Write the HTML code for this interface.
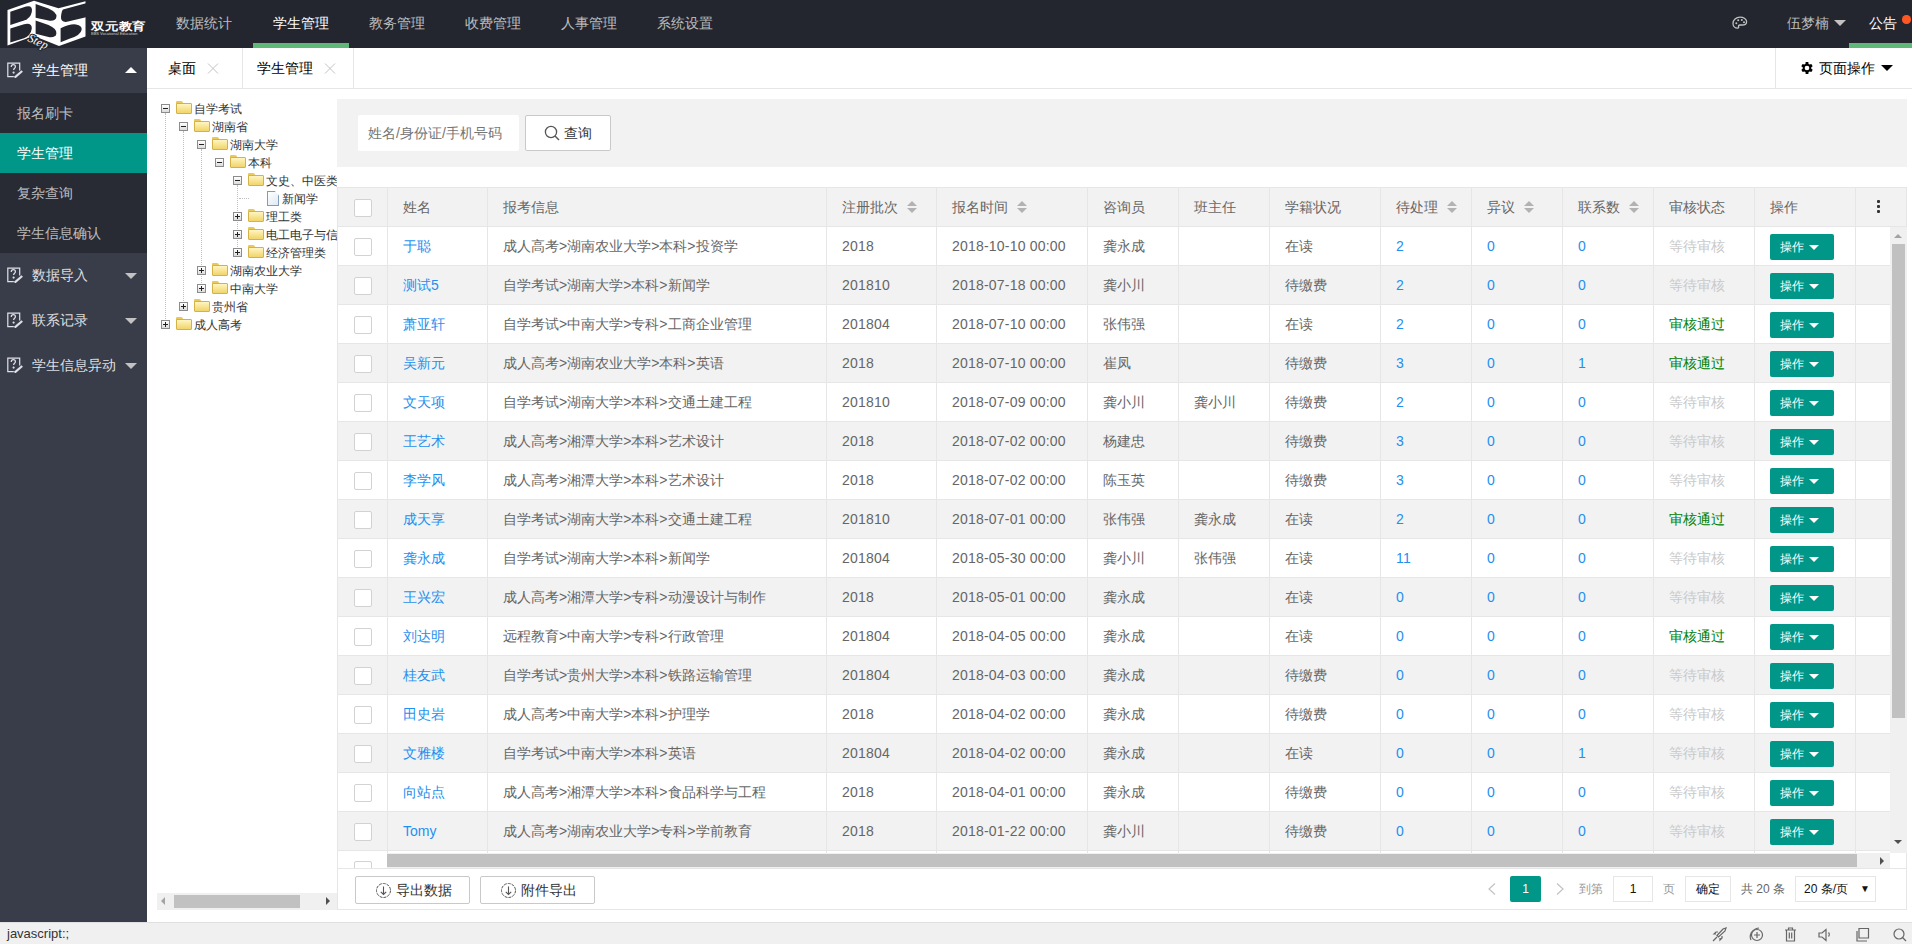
<!DOCTYPE html>
<html><head><meta charset="utf-8">
<style>
*{box-sizing:border-box;margin:0;padding:0}
html,body{width:1912px;height:944px;overflow:hidden;background:#fff;font-family:"Liberation Sans",sans-serif;font-size:14px;color:#333}
.abs{position:absolute}
#hdr{position:absolute;left:0;top:0;width:1912px;height:48px;background:#23262E;z-index:5}
.nav{position:absolute;top:0;height:48px;line-height:46px;color:rgba(255,255,255,.7);font-size:14px;white-space:nowrap}
.nav.on{color:#fff}
#side{position:absolute;left:0;top:48px;width:147px;height:874px;background:#393D49}
.grp{position:absolute;left:0;width:147px;height:45px;line-height:45px;color:rgba(255,255,255,.85);font-size:14px}
.grp .t{position:absolute;left:32px;top:0}
.grp .ic{position:absolute;left:7px;top:14px;width:16px;height:16px}
.grp .ar{position:absolute;left:125px;top:20px;width:0;height:0;border-left:6px solid transparent;border-right:6px solid transparent;border-top:6px solid #c2c2c2}
.sub{position:absolute;left:0;width:147px;height:40px;line-height:40px;color:rgba(255,255,255,.7);padding-left:17px}
#tabs{position:absolute;left:147px;top:48px;width:1765px;height:41px;background:#fff;border-bottom:1px solid #e6e6e6}
.tab{position:absolute;top:0;height:40px;line-height:40px;color:#000;font-size:14px;font-weight:500}
.tab .x{position:absolute;top:0;color:#c2c2c2;font-size:15px}
#status{position:absolute;left:0;top:922px;width:1912px;height:22px;background:#f0f0f0;border-top:1px solid #e0e0e0}

.sw{width:9px;height:9px;border:1px solid #8c8c8c;background:linear-gradient(#fff,#dcdcdc);}
.sw .h{position:absolute;left:1px;top:3px;width:5px;height:1px;background:#222}
.sw .v{position:absolute;left:3px;top:1px;width:1px;height:5px;background:#222}
.fd{width:16px;height:13px}
.fd::before{content:"";position:absolute;left:0;top:0;width:7px;height:4px;background:#e9c95b;border-radius:1px 2px 0 0}
.fd i{position:absolute;left:0;top:2px;width:16px;height:11px;background:linear-gradient(#fff5c0,#f1d46a);border:1px solid #d4b24a;border-radius:1px}
.fl{width:12px;height:15px;border:1px solid #7f9db9;background:linear-gradient(135deg,#fff,#dfe9f5);clip-path:polygon(0 0,65% 0,100% 30%,100% 100%,0 100%)}
.tt{font-size:12px;line-height:18px;color:#333;white-space:nowrap}
.dl{width:1px;border-left:1px dotted #c0c0c0}
.vl{width:1px;background:#e6e6e6}
.cb{width:18px;height:18px;border:1px solid #d2d2d2;background:#fff;border-radius:2px}
.th{font-size:14px;line-height:20px;color:#666;white-space:nowrap}
.td{font-size:14px;line-height:20px;color:#666;white-space:nowrap}
.lk{font-size:14px;line-height:20px;color:#1E90F0;white-space:nowrap}
.num{letter-spacing:0.2px}
.sort{width:10px;height:12px}
.sort .u{position:absolute;left:0;top:0;border-left:5px solid transparent;border-right:5px solid transparent;border-bottom:5px solid #b2b2b2}
.sort .d{position:absolute;left:0;top:7px;border-left:5px solid transparent;border-right:5px solid transparent;border-top:5px solid #b2b2b2}
.btn{width:64px;height:26px;background:#009688;color:#fff;border-radius:2px;font-size:12px;line-height:26px;padding-left:10px}
.btn i{position:absolute;left:39px;top:11px;border-left:5px solid transparent;border-right:5px solid transparent;border-top:5px solid #fff}
.obtn{width:115px;height:28px;border:1px solid #c9c9c9;background:#fff;border-radius:2px;font-size:14px;line-height:26px;color:#333}
.pg{font-size:12px;line-height:26px}
</style></head><body>

<!-- HEADER -->
<div id="hdr">
  <svg class="abs" style="left:0;top:0;overflow:visible" width="92" height="52" viewBox="0 0 92 52">
    <polygon points="7.5,10 34,0.8 58.5,8.3 85.5,1.3 85.5,36.5 59,46 34,36 7.5,45.5" fill="#fff"/>
    <g fill="#23262E">
      <path d="M10.3,11.8 L26,6.6 Q33,5 31.8,12 Q30.5,18.5 24,20.6 L10.3,25 Z"/>
      <path d="M10.3,28.4 L24,24.2 Q32,22.4 31.8,28.4 Q30.8,35.5 24,38.2 L10.3,42.4 Z"/>
      <path d="M35.6,4 L48.5,8.6 Q57,12.2 56.4,17 Q55.6,21.6 48.5,20.6 L35.6,17.8 Z"/>
      <path d="M35.6,20.5 L48.5,25 Q57,28.8 56.4,33.4 Q55.6,38 48.5,37 L35.6,33.8 Z"/>
      <path d="M63,9.6 L86,3.2 L86,17.2 L67,21.8 Q60.6,22.6 61,16.6 Q61.5,11.2 63,9.6 Z"/>
      <path d="M60.6,28.2 Q70,23.6 76,24.4 Q82.5,25.6 81.6,30 Q80.6,35.2 70,38.6 L60.6,42.2 Z"/>
    </g>
    <g transform="translate(30.5 33.5) rotate(25)"><text x="0" y="8" fill="#23262E" stroke="#23262E" stroke-width="2.2" font-size="12" font-style="italic" font-family="Liberation Serif">Step</text><text x="0" y="8" fill="#fff" font-size="12" font-style="italic" font-family="Liberation Serif">Step</text></g>
  </svg>
  <div class="abs" style="left:91px;top:19px;color:#fff;font-weight:bold;font-size:14px;line-height:16px;letter-spacing:-0.2px;transform:scaleY(.82);transform-origin:0 0;white-space:nowrap">双元教育</div>
  <div class="abs" style="left:91px;top:32px;width:56px;height:4px;color:#ccc;font-size:4px;line-height:4px;white-space:nowrap;overflow:hidden">BBS Vocational Education</div>

  <div class="nav" style="left:176px">数据统计</div>
  <div class="nav on" style="left:273px">学生管理</div>
  <div class="nav" style="left:369px">教务管理</div>
  <div class="nav" style="left:465px">收费管理</div>
  <div class="nav" style="left:561px">人事管理</div>
  <div class="nav" style="left:657px">系统设置</div>
  <div class="abs" style="left:253px;top:43px;width:96px;height:5px;background:#5FB878"></div>

  <!-- palette icon -->
  <svg class="abs" style="left:1731px;top:15px" width="18" height="16" viewBox="0 0 18 16">
    <path d="M9 2.2C5 2.2 2 5 2 8.5c0 2.6 2 4.6 4.6 4.6 1 0 1.2-.7 1-1.4-.3-.9.3-1.7 1.3-1.7h2.3c2.3 0 4.4-1.2 4.4-3.3C15.6 4.2 12.8 2.2 9 2.2z" fill="none" stroke="#c2c2c2" stroke-width="1.3"/>
    <circle cx="5.3" cy="8.2" r="1" fill="#c2c2c2"/><circle cx="7.2" cy="5.2" r="1" fill="#c2c2c2"/><circle cx="10.8" cy="5" r="1" fill="#c2c2c2"/><circle cx="13" cy="7.3" r="1" fill="#c2c2c2"/>
  </svg>
  <div class="nav" style="left:1787px">伍梦楠</div>
  <div class="abs" style="left:1834px;top:20px;width:0;height:0;border-left:6px solid transparent;border-right:6px solid transparent;border-top:6px solid #c2c2c2"></div>
  <div class="nav on" style="left:1869px">公告</div>
  <div class="abs" style="left:1902px;top:15px;width:8.5px;height:8.5px;border-radius:50%;background:#FF5722"></div>
  <div class="abs" style="left:1849px;top:43px;width:63px;height:5px;background:#5FB878"></div>
</div>

<!-- SIDEBAR -->
<div id="side">
  <div class="grp" style="top:0;color:#fff"><svg class="ic" viewBox="0 0 16 16"><use href="#ico"/></svg><span class="t">学生管理</span><div class="ar" style="border-top:none;border-bottom:6px solid #fff;top:19px"></div></div>
  <div class="abs" style="left:0;top:45px;width:147px;height:160px;background:#282B33"></div>
  <div class="sub" style="top:45px">报名刷卡</div>
  <div class="sub" style="top:85px;background:#009688;color:#fff">学生管理</div>
  <div class="sub" style="top:125px">复杂查询</div>
  <div class="sub" style="top:165px">学生信息确认</div>
  <div class="grp" style="top:205px"><svg class="ic" viewBox="0 0 16 16"><use href="#ico"/></svg><span class="t">数据导入</span><div class="ar"></div></div>
  <div class="grp" style="top:250px"><svg class="ic" viewBox="0 0 16 16"><use href="#ico"/></svg><span class="t">联系记录</span><div class="ar"></div></div>
  <div class="grp" style="top:295px"><svg class="ic" viewBox="0 0 16 16"><use href="#ico"/></svg><span class="t">学生信息异动</span><div class="ar"></div></div>
</div>
<svg width="0" height="0" style="position:absolute"><defs>
  <g id="ico" fill="none" stroke="#e0e0e8" stroke-width="1.2">
    <path d="M12.7 8.5V1.2H0.8v13.4h6"/>
    <path d="M4.2 5c0-1.6 1-2.3 2.1-2.3s2.1.8 2.1 2c0 1.6-1.8 1.6-1.8 3.4"/>
    <circle cx="6.6" cy="10.6" r=".5" fill="#e0e0e8"/>
    <path d="M7.6 15.6l7.6-6.6" stroke-width="2.2"/>
  </g>
</defs></svg>

<!-- TABS -->
<div id="tabs">
  <div class="abs" style="left:95px;top:0;width:1px;height:40px;background:#e6e6e6"></div>
  <div class="abs" style="left:206px;top:0;width:1px;height:40px;background:#e6e6e6"></div>
  <div class="tab" style="left:21px">桌面</div>
  <svg class="abs" style="left:60px;top:15px" width="12" height="11" viewBox="0 0 12 11"><path d="M1 0.5l10 10M11 0.5l-10 10" stroke="#c2c2c2" stroke-width="1"/></svg>
  <div class="tab" style="left:110px">学生管理</div>
  <svg class="abs" style="left:177px;top:15px" width="12" height="11" viewBox="0 0 12 11"><path d="M1 0.5l10 10M11 0.5l-10 10" stroke="#c2c2c2" stroke-width="1"/></svg>
  <svg class="abs" style="left:1652px;top:12px" width="16" height="16" viewBox="0 0 24 24"><path fill="#000" d="M19.4 13a7.5 7.5 0 0 0 0-2l2.1-1.6-2-3.5-2.5 1a7.6 7.6 0 0 0-1.7-1L15 3h-4l-.4 2.9a7.6 7.6 0 0 0-1.7 1l-2.5-1-2 3.5L6.6 11a7.5 7.5 0 0 0 0 2l-2.1 1.6 2 3.5 2.5-1a7.6 7.6 0 0 0 1.7 1L11 21h4l.4-2.9a7.6 7.6 0 0 0 1.7-1l2.5 1 2-3.5zM13 15.5a3.5 3.5 0 1 1 0-7 3.5 3.5 0 0 1 0 7z" transform="translate(-1 0)"/></svg>
  <div class="tab" style="left:1672px;font-weight:500">页面操作</div>
  <div class="abs" style="left:1734px;top:17px;width:0;height:0;border-left:6px solid transparent;border-right:6px solid transparent;border-top:6px solid #000"></div>
  <div class="abs" style="left:1628px;top:0;width:1px;height:40px;background:#e6e6e6"></div>
</div>

<div class="abs" style="left:147px;top:89px;width:190px;height:833px;background:#fff;overflow:hidden">
<div class="abs dl" style="left:18px;top:24px;height:206px"></div>
<div class="abs dl" style="left:36px;top:42px;height:170px"></div>
<div class="abs dl" style="left:54px;top:60px;height:134px"></div>
<div class="abs dl" style="left:90px;top:96px;height:62px"></div>
<div class="abs sw" style="left:14px;top:15px"><i class="h"></i></div>
<div class="abs fd" style="left:29px;top:12px"><i></i></div>
<div class="abs tt" style="left:47px;top:11px">自学考试</div>
<div class="abs sw" style="left:32px;top:33px"><i class="h"></i></div>
<div class="abs fd" style="left:47px;top:30px"><i></i></div>
<div class="abs tt" style="left:65px;top:29px">湖南省</div>
<div class="abs sw" style="left:50px;top:51px"><i class="h"></i></div>
<div class="abs fd" style="left:65px;top:48px"><i></i></div>
<div class="abs tt" style="left:83px;top:47px">湖南大学</div>
<div class="abs sw" style="left:68px;top:69px"><i class="h"></i></div>
<div class="abs fd" style="left:83px;top:66px"><i></i></div>
<div class="abs tt" style="left:101px;top:65px">本科</div>
<div class="abs sw" style="left:86px;top:87px"><i class="h"></i></div>
<div class="abs fd" style="left:101px;top:84px"><i></i></div>
<div class="abs tt" style="left:119px;top:83px">文史、中医类</div>
<div class="abs fl" style="left:120px;top:102px"></div>
<div class="abs tt" style="left:135px;top:101px">新闻学</div>
<div class="abs sw" style="left:86px;top:123px"><i class="h"></i><i class="v"></i></div>
<div class="abs fd" style="left:101px;top:120px"><i></i></div>
<div class="abs tt" style="left:119px;top:119px">理工类</div>
<div class="abs sw" style="left:86px;top:141px"><i class="h"></i><i class="v"></i></div>
<div class="abs fd" style="left:101px;top:138px"><i></i></div>
<div class="abs tt" style="left:119px;top:137px">电工电子与信</div>
<div class="abs sw" style="left:86px;top:159px"><i class="h"></i><i class="v"></i></div>
<div class="abs fd" style="left:101px;top:156px"><i></i></div>
<div class="abs tt" style="left:119px;top:155px">经济管理类</div>
<div class="abs sw" style="left:50px;top:177px"><i class="h"></i><i class="v"></i></div>
<div class="abs fd" style="left:65px;top:174px"><i></i></div>
<div class="abs tt" style="left:83px;top:173px">湖南农业大学</div>
<div class="abs sw" style="left:50px;top:195px"><i class="h"></i><i class="v"></i></div>
<div class="abs fd" style="left:65px;top:192px"><i></i></div>
<div class="abs tt" style="left:83px;top:191px">中南大学</div>
<div class="abs sw" style="left:32px;top:213px"><i class="h"></i><i class="v"></i></div>
<div class="abs fd" style="left:47px;top:210px"><i></i></div>
<div class="abs tt" style="left:65px;top:209px">贵州省</div>
<div class="abs sw" style="left:14px;top:231px"><i class="h"></i><i class="v"></i></div>
<div class="abs fd" style="left:29px;top:228px"><i></i></div>
<div class="abs tt" style="left:47px;top:227px">成人高考</div>
<div class="abs" style="left:92px;top:109px;width:10px;height:1px;border-top:1px dotted #c0c0c0"></div>
<div class="abs" style="left:10px;top:804px;width:180px;height:17px;background:#f0f0f0"></div>
<div class="abs" style="left:27px;top:806px;width:126px;height:13px;background:#c1c1c1"></div>
<div class="abs" style="left:14px;top:808px;width:0;height:0;border-top:4px solid transparent;border-bottom:4px solid transparent;border-right:4px solid #a3a3a3"></div>
<div class="abs" style="left:179px;top:808px;width:0;height:0;border-top:4px solid transparent;border-bottom:4px solid transparent;border-left:4px solid #505050"></div>
</div>
<div class="abs" style="left:337px;top:99px;width:1570px;height:68px;background:#f2f2f2"></div>
<div class="abs" style="left:358px;top:115px;width:161px;height:36px;background:#fff;border-radius:2px;color:#757575;line-height:36px;padding-left:10px;font-size:14px">姓名/身份证/手机号码</div>
<div class="abs" style="left:525px;top:115px;width:86px;height:36px;background:#fff;border:1px solid #c9c9c9;border-radius:2px;line-height:34px;font-size:14px;color:#333"><svg class="abs" style="left:18px;top:9px" width="17" height="17" viewBox="0 0 17 17"><circle cx="7" cy="7" r="5.6" fill="none" stroke="#555" stroke-width="1.3"/><path d="M11 11l4 4" stroke="#555" stroke-width="1.5"/></svg><span class="abs" style="left:38px;top:0">查询</span></div>
<div class="abs" style="left:337px;top:187px;width:1570px;height:723px;border:1px solid #e6e6e6;background:#fff;overflow:hidden">
</div>
<div class="abs" style="left:338px;top:188px;width:1568px;height:38px;background:#f2f2f2"></div>
<div class="abs" style="left:338px;top:226px;width:1568px;height:1px;background:#e6e6e6"></div>
<div class="abs cb" style="left:354px;top:199px"></div>
<div class="abs vl" style="left:387px;top:188px;height:38px"></div>
<div class="abs th" style="left:403px;top:197px">姓名</div>
<div class="abs vl" style="left:487px;top:188px;height:38px"></div>
<div class="abs th" style="left:503px;top:197px">报考信息</div>
<div class="abs vl" style="left:826px;top:188px;height:38px"></div>
<div class="abs th" style="left:842px;top:197px">注册批次</div>
<div class="abs sort" style="left:907px;top:201px"><i class="u"></i><i class="d"></i></div>
<div class="abs vl" style="left:936px;top:188px;height:38px"></div>
<div class="abs th" style="left:952px;top:197px">报名时间</div>
<div class="abs sort" style="left:1017px;top:201px"><i class="u"></i><i class="d"></i></div>
<div class="abs vl" style="left:1087px;top:188px;height:38px"></div>
<div class="abs th" style="left:1103px;top:197px">咨询员</div>
<div class="abs vl" style="left:1178px;top:188px;height:38px"></div>
<div class="abs th" style="left:1194px;top:197px">班主任</div>
<div class="abs vl" style="left:1269px;top:188px;height:38px"></div>
<div class="abs th" style="left:1285px;top:197px">学籍状况</div>
<div class="abs vl" style="left:1380px;top:188px;height:38px"></div>
<div class="abs th" style="left:1396px;top:197px">待处理</div>
<div class="abs sort" style="left:1447px;top:201px"><i class="u"></i><i class="d"></i></div>
<div class="abs vl" style="left:1471px;top:188px;height:38px"></div>
<div class="abs th" style="left:1487px;top:197px">异议</div>
<div class="abs sort" style="left:1524px;top:201px"><i class="u"></i><i class="d"></i></div>
<div class="abs vl" style="left:1562px;top:188px;height:38px"></div>
<div class="abs th" style="left:1578px;top:197px">联系数</div>
<div class="abs sort" style="left:1629px;top:201px"><i class="u"></i><i class="d"></i></div>
<div class="abs vl" style="left:1653px;top:188px;height:38px"></div>
<div class="abs th" style="left:1669px;top:197px">审核状态</div>
<div class="abs vl" style="left:1754px;top:188px;height:38px"></div>
<div class="abs th" style="left:1770px;top:197px">操作</div>
<div class="abs vl" style="left:1855px;top:188px;height:38px"></div>
<div class="abs" style="left:1877px;top:200px;width:3px;height:3px;background:#333;border-radius:1px"></div>
<div class="abs" style="left:1877px;top:205px;width:3px;height:3px;background:#333;border-radius:1px"></div>
<div class="abs" style="left:1877px;top:210px;width:3px;height:3px;background:#333;border-radius:1px"></div>
<div class="abs" style="left:338px;top:227px;width:1552px;height:626px;overflow:hidden">
<div class="abs" style="left:0;top:0px;width:1552px;height:38px;background:#fff"></div>
<div class="abs" style="left:0;top:38px;width:1552px;height:1px;background:#e6e6e6"></div>
<div class="abs vl" style="left:49px;top:0px;height:38px"></div>
<div class="abs vl" style="left:149px;top:0px;height:38px"></div>
<div class="abs vl" style="left:488px;top:0px;height:38px"></div>
<div class="abs vl" style="left:598px;top:0px;height:38px"></div>
<div class="abs vl" style="left:749px;top:0px;height:38px"></div>
<div class="abs vl" style="left:840px;top:0px;height:38px"></div>
<div class="abs vl" style="left:931px;top:0px;height:38px"></div>
<div class="abs vl" style="left:1042px;top:0px;height:38px"></div>
<div class="abs vl" style="left:1133px;top:0px;height:38px"></div>
<div class="abs vl" style="left:1224px;top:0px;height:38px"></div>
<div class="abs vl" style="left:1315px;top:0px;height:38px"></div>
<div class="abs vl" style="left:1416px;top:0px;height:38px"></div>
<div class="abs vl" style="left:1517px;top:0px;height:38px"></div>
<div class="abs cb" style="left:16px;top:11px"></div>
<div class="abs lk" style="left:65px;top:9px">于聪</div>
<div class="abs td" style="left:165px;top:9px">成人高考>湖南农业大学>本科>投资学</div>
<div class="abs td num" style="left:504px;top:9px">2018</div>
<div class="abs td num" style="left:614px;top:9px">2018-10-10 00:00</div>
<div class="abs td" style="left:765px;top:9px">龚永成</div>
<div class="abs td" style="left:856px;top:9px"></div>
<div class="abs td" style="left:947px;top:9px">在读</div>
<div class="abs lk num" style="left:1058px;top:9px">2</div>
<div class="abs lk num" style="left:1149px;top:9px">0</div>
<div class="abs lk num" style="left:1240px;top:9px">0</div>
<div class="abs td" style="left:1331px;top:9px;color:#c9c9c9">等待审核</div>
<div class="abs btn" style="left:1432px;top:7px">操作<i></i></div>
<div class="abs" style="left:0;top:39px;width:1552px;height:38px;background:#f2f2f2"></div>
<div class="abs" style="left:0;top:77px;width:1552px;height:1px;background:#e6e6e6"></div>
<div class="abs vl" style="left:49px;top:39px;height:38px"></div>
<div class="abs vl" style="left:149px;top:39px;height:38px"></div>
<div class="abs vl" style="left:488px;top:39px;height:38px"></div>
<div class="abs vl" style="left:598px;top:39px;height:38px"></div>
<div class="abs vl" style="left:749px;top:39px;height:38px"></div>
<div class="abs vl" style="left:840px;top:39px;height:38px"></div>
<div class="abs vl" style="left:931px;top:39px;height:38px"></div>
<div class="abs vl" style="left:1042px;top:39px;height:38px"></div>
<div class="abs vl" style="left:1133px;top:39px;height:38px"></div>
<div class="abs vl" style="left:1224px;top:39px;height:38px"></div>
<div class="abs vl" style="left:1315px;top:39px;height:38px"></div>
<div class="abs vl" style="left:1416px;top:39px;height:38px"></div>
<div class="abs vl" style="left:1517px;top:39px;height:38px"></div>
<div class="abs cb" style="left:16px;top:50px"></div>
<div class="abs lk" style="left:65px;top:48px">测试5</div>
<div class="abs td" style="left:165px;top:48px">自学考试>湖南大学>本科>新闻学</div>
<div class="abs td num" style="left:504px;top:48px">201810</div>
<div class="abs td num" style="left:614px;top:48px">2018-07-18 00:00</div>
<div class="abs td" style="left:765px;top:48px">龚小川</div>
<div class="abs td" style="left:856px;top:48px"></div>
<div class="abs td" style="left:947px;top:48px">待缴费</div>
<div class="abs lk num" style="left:1058px;top:48px">2</div>
<div class="abs lk num" style="left:1149px;top:48px">0</div>
<div class="abs lk num" style="left:1240px;top:48px">0</div>
<div class="abs td" style="left:1331px;top:48px;color:#c9c9c9">等待审核</div>
<div class="abs btn" style="left:1432px;top:46px">操作<i></i></div>
<div class="abs" style="left:0;top:78px;width:1552px;height:38px;background:#fff"></div>
<div class="abs" style="left:0;top:116px;width:1552px;height:1px;background:#e6e6e6"></div>
<div class="abs vl" style="left:49px;top:78px;height:38px"></div>
<div class="abs vl" style="left:149px;top:78px;height:38px"></div>
<div class="abs vl" style="left:488px;top:78px;height:38px"></div>
<div class="abs vl" style="left:598px;top:78px;height:38px"></div>
<div class="abs vl" style="left:749px;top:78px;height:38px"></div>
<div class="abs vl" style="left:840px;top:78px;height:38px"></div>
<div class="abs vl" style="left:931px;top:78px;height:38px"></div>
<div class="abs vl" style="left:1042px;top:78px;height:38px"></div>
<div class="abs vl" style="left:1133px;top:78px;height:38px"></div>
<div class="abs vl" style="left:1224px;top:78px;height:38px"></div>
<div class="abs vl" style="left:1315px;top:78px;height:38px"></div>
<div class="abs vl" style="left:1416px;top:78px;height:38px"></div>
<div class="abs vl" style="left:1517px;top:78px;height:38px"></div>
<div class="abs cb" style="left:16px;top:89px"></div>
<div class="abs lk" style="left:65px;top:87px">萧亚轩</div>
<div class="abs td" style="left:165px;top:87px">自学考试>中南大学>专科>工商企业管理</div>
<div class="abs td num" style="left:504px;top:87px">201804</div>
<div class="abs td num" style="left:614px;top:87px">2018-07-10 00:00</div>
<div class="abs td" style="left:765px;top:87px">张伟强</div>
<div class="abs td" style="left:856px;top:87px"></div>
<div class="abs td" style="left:947px;top:87px">在读</div>
<div class="abs lk num" style="left:1058px;top:87px">2</div>
<div class="abs lk num" style="left:1149px;top:87px">0</div>
<div class="abs lk num" style="left:1240px;top:87px">0</div>
<div class="abs td" style="left:1331px;top:87px;color:#008000">审核通过</div>
<div class="abs btn" style="left:1432px;top:85px">操作<i></i></div>
<div class="abs" style="left:0;top:117px;width:1552px;height:38px;background:#f2f2f2"></div>
<div class="abs" style="left:0;top:155px;width:1552px;height:1px;background:#e6e6e6"></div>
<div class="abs vl" style="left:49px;top:117px;height:38px"></div>
<div class="abs vl" style="left:149px;top:117px;height:38px"></div>
<div class="abs vl" style="left:488px;top:117px;height:38px"></div>
<div class="abs vl" style="left:598px;top:117px;height:38px"></div>
<div class="abs vl" style="left:749px;top:117px;height:38px"></div>
<div class="abs vl" style="left:840px;top:117px;height:38px"></div>
<div class="abs vl" style="left:931px;top:117px;height:38px"></div>
<div class="abs vl" style="left:1042px;top:117px;height:38px"></div>
<div class="abs vl" style="left:1133px;top:117px;height:38px"></div>
<div class="abs vl" style="left:1224px;top:117px;height:38px"></div>
<div class="abs vl" style="left:1315px;top:117px;height:38px"></div>
<div class="abs vl" style="left:1416px;top:117px;height:38px"></div>
<div class="abs vl" style="left:1517px;top:117px;height:38px"></div>
<div class="abs cb" style="left:16px;top:128px"></div>
<div class="abs lk" style="left:65px;top:126px">吴新元</div>
<div class="abs td" style="left:165px;top:126px">成人高考>湖南农业大学>本科>英语</div>
<div class="abs td num" style="left:504px;top:126px">2018</div>
<div class="abs td num" style="left:614px;top:126px">2018-07-10 00:00</div>
<div class="abs td" style="left:765px;top:126px">崔凤</div>
<div class="abs td" style="left:856px;top:126px"></div>
<div class="abs td" style="left:947px;top:126px">待缴费</div>
<div class="abs lk num" style="left:1058px;top:126px">3</div>
<div class="abs lk num" style="left:1149px;top:126px">0</div>
<div class="abs lk num" style="left:1240px;top:126px">1</div>
<div class="abs td" style="left:1331px;top:126px;color:#008000">审核通过</div>
<div class="abs btn" style="left:1432px;top:124px">操作<i></i></div>
<div class="abs" style="left:0;top:156px;width:1552px;height:38px;background:#fff"></div>
<div class="abs" style="left:0;top:194px;width:1552px;height:1px;background:#e6e6e6"></div>
<div class="abs vl" style="left:49px;top:156px;height:38px"></div>
<div class="abs vl" style="left:149px;top:156px;height:38px"></div>
<div class="abs vl" style="left:488px;top:156px;height:38px"></div>
<div class="abs vl" style="left:598px;top:156px;height:38px"></div>
<div class="abs vl" style="left:749px;top:156px;height:38px"></div>
<div class="abs vl" style="left:840px;top:156px;height:38px"></div>
<div class="abs vl" style="left:931px;top:156px;height:38px"></div>
<div class="abs vl" style="left:1042px;top:156px;height:38px"></div>
<div class="abs vl" style="left:1133px;top:156px;height:38px"></div>
<div class="abs vl" style="left:1224px;top:156px;height:38px"></div>
<div class="abs vl" style="left:1315px;top:156px;height:38px"></div>
<div class="abs vl" style="left:1416px;top:156px;height:38px"></div>
<div class="abs vl" style="left:1517px;top:156px;height:38px"></div>
<div class="abs cb" style="left:16px;top:167px"></div>
<div class="abs lk" style="left:65px;top:165px">文天项</div>
<div class="abs td" style="left:165px;top:165px">自学考试>湖南大学>本科>交通土建工程</div>
<div class="abs td num" style="left:504px;top:165px">201810</div>
<div class="abs td num" style="left:614px;top:165px">2018-07-09 00:00</div>
<div class="abs td" style="left:765px;top:165px">龚小川</div>
<div class="abs td" style="left:856px;top:165px">龚小川</div>
<div class="abs td" style="left:947px;top:165px">待缴费</div>
<div class="abs lk num" style="left:1058px;top:165px">2</div>
<div class="abs lk num" style="left:1149px;top:165px">0</div>
<div class="abs lk num" style="left:1240px;top:165px">0</div>
<div class="abs td" style="left:1331px;top:165px;color:#c9c9c9">等待审核</div>
<div class="abs btn" style="left:1432px;top:163px">操作<i></i></div>
<div class="abs" style="left:0;top:195px;width:1552px;height:38px;background:#f2f2f2"></div>
<div class="abs" style="left:0;top:233px;width:1552px;height:1px;background:#e6e6e6"></div>
<div class="abs vl" style="left:49px;top:195px;height:38px"></div>
<div class="abs vl" style="left:149px;top:195px;height:38px"></div>
<div class="abs vl" style="left:488px;top:195px;height:38px"></div>
<div class="abs vl" style="left:598px;top:195px;height:38px"></div>
<div class="abs vl" style="left:749px;top:195px;height:38px"></div>
<div class="abs vl" style="left:840px;top:195px;height:38px"></div>
<div class="abs vl" style="left:931px;top:195px;height:38px"></div>
<div class="abs vl" style="left:1042px;top:195px;height:38px"></div>
<div class="abs vl" style="left:1133px;top:195px;height:38px"></div>
<div class="abs vl" style="left:1224px;top:195px;height:38px"></div>
<div class="abs vl" style="left:1315px;top:195px;height:38px"></div>
<div class="abs vl" style="left:1416px;top:195px;height:38px"></div>
<div class="abs vl" style="left:1517px;top:195px;height:38px"></div>
<div class="abs cb" style="left:16px;top:206px"></div>
<div class="abs lk" style="left:65px;top:204px">王艺术</div>
<div class="abs td" style="left:165px;top:204px">成人高考>湘潭大学>本科>艺术设计</div>
<div class="abs td num" style="left:504px;top:204px">2018</div>
<div class="abs td num" style="left:614px;top:204px">2018-07-02 00:00</div>
<div class="abs td" style="left:765px;top:204px">杨建忠</div>
<div class="abs td" style="left:856px;top:204px"></div>
<div class="abs td" style="left:947px;top:204px">待缴费</div>
<div class="abs lk num" style="left:1058px;top:204px">3</div>
<div class="abs lk num" style="left:1149px;top:204px">0</div>
<div class="abs lk num" style="left:1240px;top:204px">0</div>
<div class="abs td" style="left:1331px;top:204px;color:#c9c9c9">等待审核</div>
<div class="abs btn" style="left:1432px;top:202px">操作<i></i></div>
<div class="abs" style="left:0;top:234px;width:1552px;height:38px;background:#fff"></div>
<div class="abs" style="left:0;top:272px;width:1552px;height:1px;background:#e6e6e6"></div>
<div class="abs vl" style="left:49px;top:234px;height:38px"></div>
<div class="abs vl" style="left:149px;top:234px;height:38px"></div>
<div class="abs vl" style="left:488px;top:234px;height:38px"></div>
<div class="abs vl" style="left:598px;top:234px;height:38px"></div>
<div class="abs vl" style="left:749px;top:234px;height:38px"></div>
<div class="abs vl" style="left:840px;top:234px;height:38px"></div>
<div class="abs vl" style="left:931px;top:234px;height:38px"></div>
<div class="abs vl" style="left:1042px;top:234px;height:38px"></div>
<div class="abs vl" style="left:1133px;top:234px;height:38px"></div>
<div class="abs vl" style="left:1224px;top:234px;height:38px"></div>
<div class="abs vl" style="left:1315px;top:234px;height:38px"></div>
<div class="abs vl" style="left:1416px;top:234px;height:38px"></div>
<div class="abs vl" style="left:1517px;top:234px;height:38px"></div>
<div class="abs cb" style="left:16px;top:245px"></div>
<div class="abs lk" style="left:65px;top:243px">李学风</div>
<div class="abs td" style="left:165px;top:243px">成人高考>湘潭大学>本科>艺术设计</div>
<div class="abs td num" style="left:504px;top:243px">2018</div>
<div class="abs td num" style="left:614px;top:243px">2018-07-02 00:00</div>
<div class="abs td" style="left:765px;top:243px">陈玉英</div>
<div class="abs td" style="left:856px;top:243px"></div>
<div class="abs td" style="left:947px;top:243px">待缴费</div>
<div class="abs lk num" style="left:1058px;top:243px">3</div>
<div class="abs lk num" style="left:1149px;top:243px">0</div>
<div class="abs lk num" style="left:1240px;top:243px">0</div>
<div class="abs td" style="left:1331px;top:243px;color:#c9c9c9">等待审核</div>
<div class="abs btn" style="left:1432px;top:241px">操作<i></i></div>
<div class="abs" style="left:0;top:273px;width:1552px;height:38px;background:#f2f2f2"></div>
<div class="abs" style="left:0;top:311px;width:1552px;height:1px;background:#e6e6e6"></div>
<div class="abs vl" style="left:49px;top:273px;height:38px"></div>
<div class="abs vl" style="left:149px;top:273px;height:38px"></div>
<div class="abs vl" style="left:488px;top:273px;height:38px"></div>
<div class="abs vl" style="left:598px;top:273px;height:38px"></div>
<div class="abs vl" style="left:749px;top:273px;height:38px"></div>
<div class="abs vl" style="left:840px;top:273px;height:38px"></div>
<div class="abs vl" style="left:931px;top:273px;height:38px"></div>
<div class="abs vl" style="left:1042px;top:273px;height:38px"></div>
<div class="abs vl" style="left:1133px;top:273px;height:38px"></div>
<div class="abs vl" style="left:1224px;top:273px;height:38px"></div>
<div class="abs vl" style="left:1315px;top:273px;height:38px"></div>
<div class="abs vl" style="left:1416px;top:273px;height:38px"></div>
<div class="abs vl" style="left:1517px;top:273px;height:38px"></div>
<div class="abs cb" style="left:16px;top:284px"></div>
<div class="abs lk" style="left:65px;top:282px">成天享</div>
<div class="abs td" style="left:165px;top:282px">自学考试>湖南大学>本科>交通土建工程</div>
<div class="abs td num" style="left:504px;top:282px">201810</div>
<div class="abs td num" style="left:614px;top:282px">2018-07-01 00:00</div>
<div class="abs td" style="left:765px;top:282px">张伟强</div>
<div class="abs td" style="left:856px;top:282px">龚永成</div>
<div class="abs td" style="left:947px;top:282px">在读</div>
<div class="abs lk num" style="left:1058px;top:282px">2</div>
<div class="abs lk num" style="left:1149px;top:282px">0</div>
<div class="abs lk num" style="left:1240px;top:282px">0</div>
<div class="abs td" style="left:1331px;top:282px;color:#008000">审核通过</div>
<div class="abs btn" style="left:1432px;top:280px">操作<i></i></div>
<div class="abs" style="left:0;top:312px;width:1552px;height:38px;background:#fff"></div>
<div class="abs" style="left:0;top:350px;width:1552px;height:1px;background:#e6e6e6"></div>
<div class="abs vl" style="left:49px;top:312px;height:38px"></div>
<div class="abs vl" style="left:149px;top:312px;height:38px"></div>
<div class="abs vl" style="left:488px;top:312px;height:38px"></div>
<div class="abs vl" style="left:598px;top:312px;height:38px"></div>
<div class="abs vl" style="left:749px;top:312px;height:38px"></div>
<div class="abs vl" style="left:840px;top:312px;height:38px"></div>
<div class="abs vl" style="left:931px;top:312px;height:38px"></div>
<div class="abs vl" style="left:1042px;top:312px;height:38px"></div>
<div class="abs vl" style="left:1133px;top:312px;height:38px"></div>
<div class="abs vl" style="left:1224px;top:312px;height:38px"></div>
<div class="abs vl" style="left:1315px;top:312px;height:38px"></div>
<div class="abs vl" style="left:1416px;top:312px;height:38px"></div>
<div class="abs vl" style="left:1517px;top:312px;height:38px"></div>
<div class="abs cb" style="left:16px;top:323px"></div>
<div class="abs lk" style="left:65px;top:321px">龚永成</div>
<div class="abs td" style="left:165px;top:321px">自学考试>湖南大学>本科>新闻学</div>
<div class="abs td num" style="left:504px;top:321px">201804</div>
<div class="abs td num" style="left:614px;top:321px">2018-05-30 00:00</div>
<div class="abs td" style="left:765px;top:321px">龚小川</div>
<div class="abs td" style="left:856px;top:321px">张伟强</div>
<div class="abs td" style="left:947px;top:321px">在读</div>
<div class="abs lk num" style="left:1058px;top:321px">11</div>
<div class="abs lk num" style="left:1149px;top:321px">0</div>
<div class="abs lk num" style="left:1240px;top:321px">0</div>
<div class="abs td" style="left:1331px;top:321px;color:#c9c9c9">等待审核</div>
<div class="abs btn" style="left:1432px;top:319px">操作<i></i></div>
<div class="abs" style="left:0;top:351px;width:1552px;height:38px;background:#f2f2f2"></div>
<div class="abs" style="left:0;top:389px;width:1552px;height:1px;background:#e6e6e6"></div>
<div class="abs vl" style="left:49px;top:351px;height:38px"></div>
<div class="abs vl" style="left:149px;top:351px;height:38px"></div>
<div class="abs vl" style="left:488px;top:351px;height:38px"></div>
<div class="abs vl" style="left:598px;top:351px;height:38px"></div>
<div class="abs vl" style="left:749px;top:351px;height:38px"></div>
<div class="abs vl" style="left:840px;top:351px;height:38px"></div>
<div class="abs vl" style="left:931px;top:351px;height:38px"></div>
<div class="abs vl" style="left:1042px;top:351px;height:38px"></div>
<div class="abs vl" style="left:1133px;top:351px;height:38px"></div>
<div class="abs vl" style="left:1224px;top:351px;height:38px"></div>
<div class="abs vl" style="left:1315px;top:351px;height:38px"></div>
<div class="abs vl" style="left:1416px;top:351px;height:38px"></div>
<div class="abs vl" style="left:1517px;top:351px;height:38px"></div>
<div class="abs cb" style="left:16px;top:362px"></div>
<div class="abs lk" style="left:65px;top:360px">王兴宏</div>
<div class="abs td" style="left:165px;top:360px">成人高考>湘潭大学>专科>动漫设计与制作</div>
<div class="abs td num" style="left:504px;top:360px">2018</div>
<div class="abs td num" style="left:614px;top:360px">2018-05-01 00:00</div>
<div class="abs td" style="left:765px;top:360px">龚永成</div>
<div class="abs td" style="left:856px;top:360px"></div>
<div class="abs td" style="left:947px;top:360px">在读</div>
<div class="abs lk num" style="left:1058px;top:360px">0</div>
<div class="abs lk num" style="left:1149px;top:360px">0</div>
<div class="abs lk num" style="left:1240px;top:360px">0</div>
<div class="abs td" style="left:1331px;top:360px;color:#c9c9c9">等待审核</div>
<div class="abs btn" style="left:1432px;top:358px">操作<i></i></div>
<div class="abs" style="left:0;top:390px;width:1552px;height:38px;background:#fff"></div>
<div class="abs" style="left:0;top:428px;width:1552px;height:1px;background:#e6e6e6"></div>
<div class="abs vl" style="left:49px;top:390px;height:38px"></div>
<div class="abs vl" style="left:149px;top:390px;height:38px"></div>
<div class="abs vl" style="left:488px;top:390px;height:38px"></div>
<div class="abs vl" style="left:598px;top:390px;height:38px"></div>
<div class="abs vl" style="left:749px;top:390px;height:38px"></div>
<div class="abs vl" style="left:840px;top:390px;height:38px"></div>
<div class="abs vl" style="left:931px;top:390px;height:38px"></div>
<div class="abs vl" style="left:1042px;top:390px;height:38px"></div>
<div class="abs vl" style="left:1133px;top:390px;height:38px"></div>
<div class="abs vl" style="left:1224px;top:390px;height:38px"></div>
<div class="abs vl" style="left:1315px;top:390px;height:38px"></div>
<div class="abs vl" style="left:1416px;top:390px;height:38px"></div>
<div class="abs vl" style="left:1517px;top:390px;height:38px"></div>
<div class="abs cb" style="left:16px;top:401px"></div>
<div class="abs lk" style="left:65px;top:399px">刘达明</div>
<div class="abs td" style="left:165px;top:399px">远程教育>中南大学>专科>行政管理</div>
<div class="abs td num" style="left:504px;top:399px">201804</div>
<div class="abs td num" style="left:614px;top:399px">2018-04-05 00:00</div>
<div class="abs td" style="left:765px;top:399px">龚永成</div>
<div class="abs td" style="left:856px;top:399px"></div>
<div class="abs td" style="left:947px;top:399px">在读</div>
<div class="abs lk num" style="left:1058px;top:399px">0</div>
<div class="abs lk num" style="left:1149px;top:399px">0</div>
<div class="abs lk num" style="left:1240px;top:399px">0</div>
<div class="abs td" style="left:1331px;top:399px;color:#008000">审核通过</div>
<div class="abs btn" style="left:1432px;top:397px">操作<i></i></div>
<div class="abs" style="left:0;top:429px;width:1552px;height:38px;background:#f2f2f2"></div>
<div class="abs" style="left:0;top:467px;width:1552px;height:1px;background:#e6e6e6"></div>
<div class="abs vl" style="left:49px;top:429px;height:38px"></div>
<div class="abs vl" style="left:149px;top:429px;height:38px"></div>
<div class="abs vl" style="left:488px;top:429px;height:38px"></div>
<div class="abs vl" style="left:598px;top:429px;height:38px"></div>
<div class="abs vl" style="left:749px;top:429px;height:38px"></div>
<div class="abs vl" style="left:840px;top:429px;height:38px"></div>
<div class="abs vl" style="left:931px;top:429px;height:38px"></div>
<div class="abs vl" style="left:1042px;top:429px;height:38px"></div>
<div class="abs vl" style="left:1133px;top:429px;height:38px"></div>
<div class="abs vl" style="left:1224px;top:429px;height:38px"></div>
<div class="abs vl" style="left:1315px;top:429px;height:38px"></div>
<div class="abs vl" style="left:1416px;top:429px;height:38px"></div>
<div class="abs vl" style="left:1517px;top:429px;height:38px"></div>
<div class="abs cb" style="left:16px;top:440px"></div>
<div class="abs lk" style="left:65px;top:438px">桂友武</div>
<div class="abs td" style="left:165px;top:438px">自学考试>贵州大学>本科>铁路运输管理</div>
<div class="abs td num" style="left:504px;top:438px">201804</div>
<div class="abs td num" style="left:614px;top:438px">2018-04-03 00:00</div>
<div class="abs td" style="left:765px;top:438px">龚永成</div>
<div class="abs td" style="left:856px;top:438px"></div>
<div class="abs td" style="left:947px;top:438px">待缴费</div>
<div class="abs lk num" style="left:1058px;top:438px">0</div>
<div class="abs lk num" style="left:1149px;top:438px">0</div>
<div class="abs lk num" style="left:1240px;top:438px">0</div>
<div class="abs td" style="left:1331px;top:438px;color:#c9c9c9">等待审核</div>
<div class="abs btn" style="left:1432px;top:436px">操作<i></i></div>
<div class="abs" style="left:0;top:468px;width:1552px;height:38px;background:#fff"></div>
<div class="abs" style="left:0;top:506px;width:1552px;height:1px;background:#e6e6e6"></div>
<div class="abs vl" style="left:49px;top:468px;height:38px"></div>
<div class="abs vl" style="left:149px;top:468px;height:38px"></div>
<div class="abs vl" style="left:488px;top:468px;height:38px"></div>
<div class="abs vl" style="left:598px;top:468px;height:38px"></div>
<div class="abs vl" style="left:749px;top:468px;height:38px"></div>
<div class="abs vl" style="left:840px;top:468px;height:38px"></div>
<div class="abs vl" style="left:931px;top:468px;height:38px"></div>
<div class="abs vl" style="left:1042px;top:468px;height:38px"></div>
<div class="abs vl" style="left:1133px;top:468px;height:38px"></div>
<div class="abs vl" style="left:1224px;top:468px;height:38px"></div>
<div class="abs vl" style="left:1315px;top:468px;height:38px"></div>
<div class="abs vl" style="left:1416px;top:468px;height:38px"></div>
<div class="abs vl" style="left:1517px;top:468px;height:38px"></div>
<div class="abs cb" style="left:16px;top:479px"></div>
<div class="abs lk" style="left:65px;top:477px">田史岩</div>
<div class="abs td" style="left:165px;top:477px">成人高考>中南大学>本科>护理学</div>
<div class="abs td num" style="left:504px;top:477px">2018</div>
<div class="abs td num" style="left:614px;top:477px">2018-04-02 00:00</div>
<div class="abs td" style="left:765px;top:477px">龚永成</div>
<div class="abs td" style="left:856px;top:477px"></div>
<div class="abs td" style="left:947px;top:477px">待缴费</div>
<div class="abs lk num" style="left:1058px;top:477px">0</div>
<div class="abs lk num" style="left:1149px;top:477px">0</div>
<div class="abs lk num" style="left:1240px;top:477px">0</div>
<div class="abs td" style="left:1331px;top:477px;color:#c9c9c9">等待审核</div>
<div class="abs btn" style="left:1432px;top:475px">操作<i></i></div>
<div class="abs" style="left:0;top:507px;width:1552px;height:38px;background:#f2f2f2"></div>
<div class="abs" style="left:0;top:545px;width:1552px;height:1px;background:#e6e6e6"></div>
<div class="abs vl" style="left:49px;top:507px;height:38px"></div>
<div class="abs vl" style="left:149px;top:507px;height:38px"></div>
<div class="abs vl" style="left:488px;top:507px;height:38px"></div>
<div class="abs vl" style="left:598px;top:507px;height:38px"></div>
<div class="abs vl" style="left:749px;top:507px;height:38px"></div>
<div class="abs vl" style="left:840px;top:507px;height:38px"></div>
<div class="abs vl" style="left:931px;top:507px;height:38px"></div>
<div class="abs vl" style="left:1042px;top:507px;height:38px"></div>
<div class="abs vl" style="left:1133px;top:507px;height:38px"></div>
<div class="abs vl" style="left:1224px;top:507px;height:38px"></div>
<div class="abs vl" style="left:1315px;top:507px;height:38px"></div>
<div class="abs vl" style="left:1416px;top:507px;height:38px"></div>
<div class="abs vl" style="left:1517px;top:507px;height:38px"></div>
<div class="abs cb" style="left:16px;top:518px"></div>
<div class="abs lk" style="left:65px;top:516px">文雅楼</div>
<div class="abs td" style="left:165px;top:516px">自学考试>中南大学>本科>英语</div>
<div class="abs td num" style="left:504px;top:516px">201804</div>
<div class="abs td num" style="left:614px;top:516px">2018-04-02 00:00</div>
<div class="abs td" style="left:765px;top:516px">龚永成</div>
<div class="abs td" style="left:856px;top:516px"></div>
<div class="abs td" style="left:947px;top:516px">在读</div>
<div class="abs lk num" style="left:1058px;top:516px">0</div>
<div class="abs lk num" style="left:1149px;top:516px">0</div>
<div class="abs lk num" style="left:1240px;top:516px">1</div>
<div class="abs td" style="left:1331px;top:516px;color:#c9c9c9">等待审核</div>
<div class="abs btn" style="left:1432px;top:514px">操作<i></i></div>
<div class="abs" style="left:0;top:546px;width:1552px;height:38px;background:#fff"></div>
<div class="abs" style="left:0;top:584px;width:1552px;height:1px;background:#e6e6e6"></div>
<div class="abs vl" style="left:49px;top:546px;height:38px"></div>
<div class="abs vl" style="left:149px;top:546px;height:38px"></div>
<div class="abs vl" style="left:488px;top:546px;height:38px"></div>
<div class="abs vl" style="left:598px;top:546px;height:38px"></div>
<div class="abs vl" style="left:749px;top:546px;height:38px"></div>
<div class="abs vl" style="left:840px;top:546px;height:38px"></div>
<div class="abs vl" style="left:931px;top:546px;height:38px"></div>
<div class="abs vl" style="left:1042px;top:546px;height:38px"></div>
<div class="abs vl" style="left:1133px;top:546px;height:38px"></div>
<div class="abs vl" style="left:1224px;top:546px;height:38px"></div>
<div class="abs vl" style="left:1315px;top:546px;height:38px"></div>
<div class="abs vl" style="left:1416px;top:546px;height:38px"></div>
<div class="abs vl" style="left:1517px;top:546px;height:38px"></div>
<div class="abs cb" style="left:16px;top:557px"></div>
<div class="abs lk" style="left:65px;top:555px">向站点</div>
<div class="abs td" style="left:165px;top:555px">成人高考>湘潭大学>本科>食品科学与工程</div>
<div class="abs td num" style="left:504px;top:555px">2018</div>
<div class="abs td num" style="left:614px;top:555px">2018-04-01 00:00</div>
<div class="abs td" style="left:765px;top:555px">龚永成</div>
<div class="abs td" style="left:856px;top:555px"></div>
<div class="abs td" style="left:947px;top:555px">待缴费</div>
<div class="abs lk num" style="left:1058px;top:555px">0</div>
<div class="abs lk num" style="left:1149px;top:555px">0</div>
<div class="abs lk num" style="left:1240px;top:555px">0</div>
<div class="abs td" style="left:1331px;top:555px;color:#c9c9c9">等待审核</div>
<div class="abs btn" style="left:1432px;top:553px">操作<i></i></div>
<div class="abs" style="left:0;top:585px;width:1552px;height:38px;background:#f2f2f2"></div>
<div class="abs" style="left:0;top:623px;width:1552px;height:1px;background:#e6e6e6"></div>
<div class="abs vl" style="left:49px;top:585px;height:38px"></div>
<div class="abs vl" style="left:149px;top:585px;height:38px"></div>
<div class="abs vl" style="left:488px;top:585px;height:38px"></div>
<div class="abs vl" style="left:598px;top:585px;height:38px"></div>
<div class="abs vl" style="left:749px;top:585px;height:38px"></div>
<div class="abs vl" style="left:840px;top:585px;height:38px"></div>
<div class="abs vl" style="left:931px;top:585px;height:38px"></div>
<div class="abs vl" style="left:1042px;top:585px;height:38px"></div>
<div class="abs vl" style="left:1133px;top:585px;height:38px"></div>
<div class="abs vl" style="left:1224px;top:585px;height:38px"></div>
<div class="abs vl" style="left:1315px;top:585px;height:38px"></div>
<div class="abs vl" style="left:1416px;top:585px;height:38px"></div>
<div class="abs vl" style="left:1517px;top:585px;height:38px"></div>
<div class="abs cb" style="left:16px;top:596px"></div>
<div class="abs lk" style="left:65px;top:594px">Tomy</div>
<div class="abs td" style="left:165px;top:594px">成人高考>湖南农业大学>专科>学前教育</div>
<div class="abs td num" style="left:504px;top:594px">2018</div>
<div class="abs td num" style="left:614px;top:594px">2018-01-22 00:00</div>
<div class="abs td" style="left:765px;top:594px">龚小川</div>
<div class="abs td" style="left:856px;top:594px"></div>
<div class="abs td" style="left:947px;top:594px">待缴费</div>
<div class="abs lk num" style="left:1058px;top:594px">0</div>
<div class="abs lk num" style="left:1149px;top:594px">0</div>
<div class="abs lk num" style="left:1240px;top:594px">0</div>
<div class="abs td" style="left:1331px;top:594px;color:#c9c9c9">等待审核</div>
<div class="abs btn" style="left:1432px;top:592px">操作<i></i></div>
<div class="abs" style="left:0;top:624px;width:1552px;height:38px;background:#fff"></div>
<div class="abs" style="left:0;top:662px;width:1552px;height:1px;background:#e6e6e6"></div>
<div class="abs vl" style="left:49px;top:624px;height:38px"></div>
<div class="abs vl" style="left:149px;top:624px;height:38px"></div>
<div class="abs vl" style="left:488px;top:624px;height:38px"></div>
<div class="abs vl" style="left:598px;top:624px;height:38px"></div>
<div class="abs vl" style="left:749px;top:624px;height:38px"></div>
<div class="abs vl" style="left:840px;top:624px;height:38px"></div>
<div class="abs vl" style="left:931px;top:624px;height:38px"></div>
<div class="abs vl" style="left:1042px;top:624px;height:38px"></div>
<div class="abs vl" style="left:1133px;top:624px;height:38px"></div>
<div class="abs vl" style="left:1224px;top:624px;height:38px"></div>
<div class="abs vl" style="left:1315px;top:624px;height:38px"></div>
<div class="abs vl" style="left:1416px;top:624px;height:38px"></div>
<div class="abs vl" style="left:1517px;top:624px;height:38px"></div>
<div class="abs cb" style="left:16px;top:635px"></div>
</div>
<div class="abs" style="left:1890px;top:227px;width:17px;height:626px;background:#f0f0f0"></div>
<div class="abs" style="left:1892px;top:244px;width:13px;height:474px;background:#c1c1c1"></div>
<div class="abs" style="left:1894px;top:234px;width:0;height:0;border-left:4px solid transparent;border-right:4px solid transparent;border-bottom:4px solid #a3a3a3"></div>
<div class="abs" style="left:1894px;top:840px;width:0;height:0;border-left:4px solid transparent;border-right:4px solid transparent;border-top:4px solid #505050"></div>
<div class="abs" style="left:387px;top:853px;width:1503px;height:16px;background:#f0f0f0"></div>
<div class="abs" style="left:387px;top:854px;width:1470px;height:13px;background:#c1c1c1"></div>
<div class="abs" style="left:1880px;top:857px;width:0;height:0;border-top:4px solid transparent;border-bottom:4px solid transparent;border-left:4px solid #505050"></div>
<div class="abs" style="left:338px;top:853px;width:49px;height:15px;background:#fff;overflow:hidden"><div class="abs cb" style="left:16px;top:8px"></div></div>
<div class="abs" style="left:338px;top:868px;width:1568px;height:1px;background:#e6e6e6"></div>
<div class="abs obtn" style="left:355px;top:876px"><svg class="abs" style="left:19px;top:5px" width="17" height="17" viewBox="0 0 17 17"><circle cx="8.5" cy="8.5" r="7" fill="none" stroke="#555" stroke-width="1" stroke-dasharray="3 1"/><path d="M8.5 4.5v8M5.8 9.8l2.7 2.7 2.7-2.7" fill="none" stroke="#555" stroke-width="1.1"/></svg><span class="abs" style="left:40px;top:0">导出数据</span></div>
<div class="abs obtn" style="left:480px;top:876px"><svg class="abs" style="left:19px;top:5px" width="17" height="17" viewBox="0 0 17 17"><circle cx="8.5" cy="8.5" r="7" fill="none" stroke="#555" stroke-width="1" stroke-dasharray="3 1"/><path d="M8.5 4.5v8M5.8 9.8l2.7 2.7 2.7-2.7" fill="none" stroke="#555" stroke-width="1.1"/></svg><span class="abs" style="left:40px;top:0">附件导出</span></div>
<svg class="abs" style="left:1487px;top:883px" width="10" height="12" viewBox="0 0 10 12"><path d="M8 0.5L2 6l6 5.5" fill="none" stroke="#c2c2c2" stroke-width="1.2"/></svg>
<div class="abs" style="left:1510px;top:876px;width:31px;height:26px;background:#009688;color:#fff;text-align:center;line-height:26px;font-size:12px;border-radius:2px">1</div>
<svg class="abs" style="left:1555px;top:883px" width="10" height="12" viewBox="0 0 10 12"><path d="M2 0.5L8 6l-6 5.5" fill="none" stroke="#c2c2c2" stroke-width="1.2"/></svg>
<div class="abs pg" style="left:1579px;top:876px;color:#999">到第</div>
<div class="abs" style="left:1613px;top:876px;width:40px;height:26px;border:1px solid #e6e6e6;background:#fff;text-align:center;line-height:24px;font-size:12px;color:#111">1</div>
<div class="abs pg" style="left:1663px;top:876px;color:#999">页</div>
<div class="abs" style="left:1685px;top:876px;width:46px;height:26px;border:1px solid #e6e6e6;background:#fff;text-align:center;line-height:24px;font-size:12px;color:#111">确定</div>
<div class="abs pg" style="left:1741px;top:876px;color:#666">共 20 条</div>
<div class="abs" style="left:1795px;top:876px;width:81px;height:26px;border:1px solid #e6e6e6;background:#fff;line-height:24px;font-size:12px;color:#111;padding-left:8px">20 条/页<span class="abs" style="left:64px;top:0;font-size:10px">&#9660;</span></div>
<!-- STATUS BAR -->
<div id="status">
  <div class="abs" style="left:7px;top:2px;font-size:13px;line-height:18px;color:#333">javascript:;</div>
</div>

<svg class="abs" style="left:1711px;top:926px" width="200" height="17" viewBox="0 0 200 17" fill="none" stroke="#666" stroke-width="1.2"><path d="M2 15l4-4M6 9.5l6-6.5 3-1-1 3-6.5 6zM5 8l-2 0 2-2 2 0M9 12v2l2-2V10"/><g transform="translate(37 0)"><circle cx="9" cy="9" r="5.5"/><path d="M9 6v6M6 9h6M3 14C1 10 3 3 11 2"/></g><g transform="translate(71 0)"><path d="M3 4h11M6.5 4V2h4v2M4.5 4v11h8V4M7.3 6.5v6M9.7 6.5v6"/></g><g transform="translate(105.5 0)"><path d="M2.5 7v4h3l4 3.5V3.5l-4 3.5zM12 6.5c1 1 1 3 0 4"/></g><g transform="translate(143 0)"><path d="M5 2.5h9.5V12H5zM3 5v10h10"/></g><g transform="translate(180 0)"><circle cx="8" cy="8" r="5"/><path d="M11.5 11.5l3.5 3.5"/></g></svg>
</body></html>
